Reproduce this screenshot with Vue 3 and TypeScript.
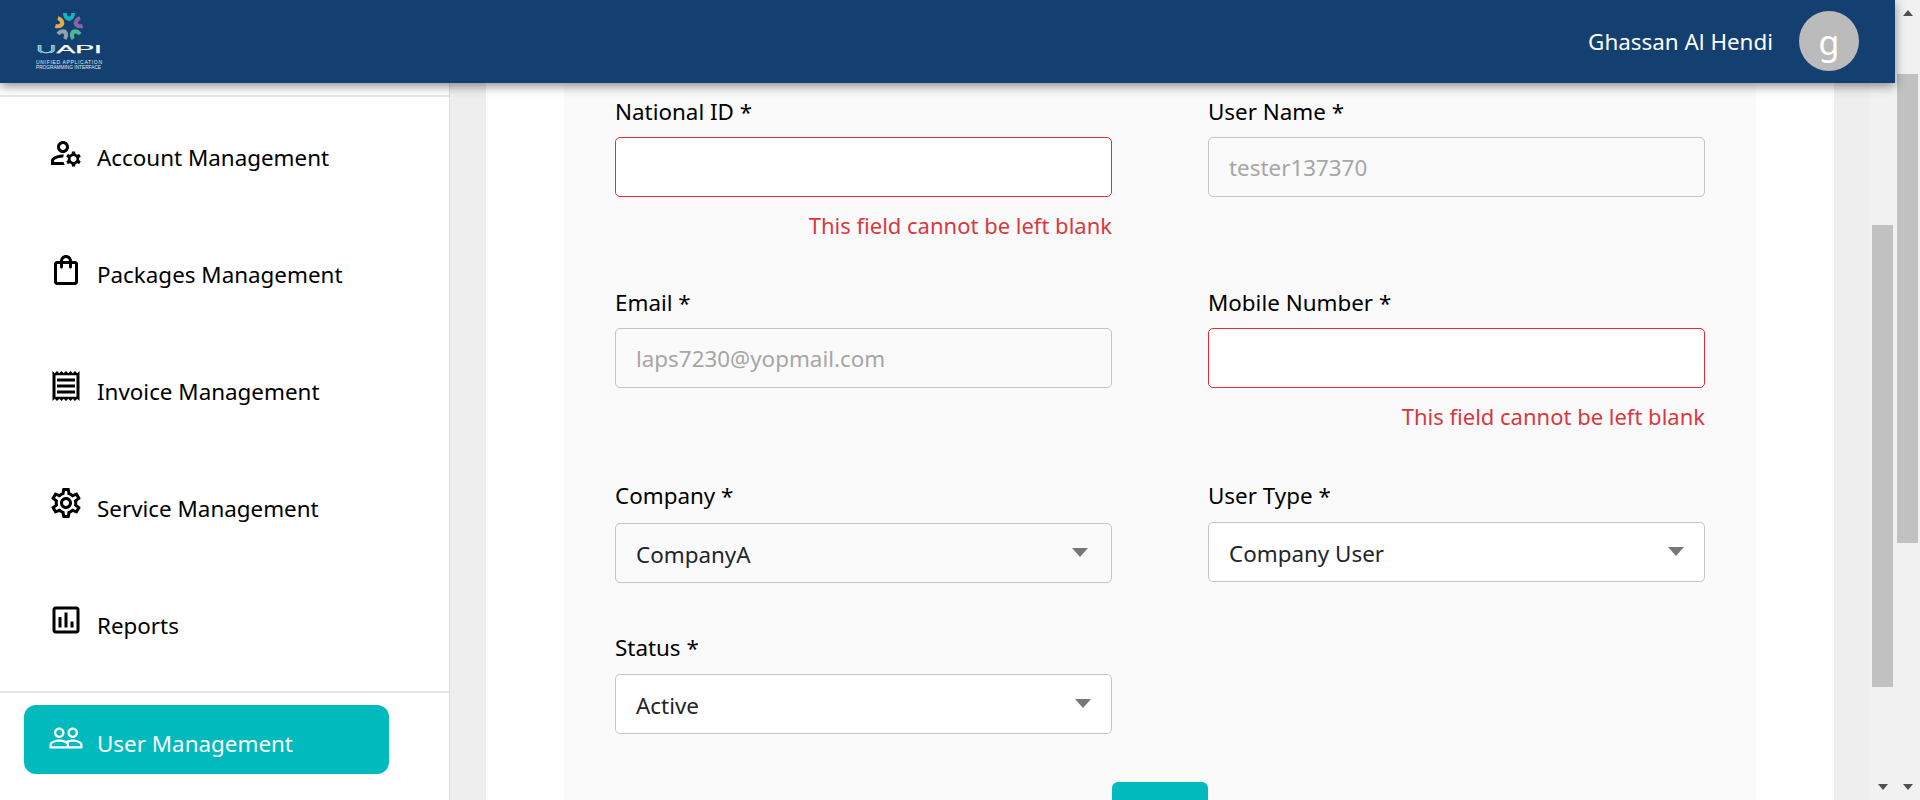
<template>
  <div class="page">
    <div class="main">
      <header class="topbar">
        <svg class="logo" viewBox="0 0 66 56" width="66" height="56">
          <g transform="translate(33 13)">
            <path v-for="p in petals" :key="p.color" :fill="p.color" :transform="`rotate(${p.angle})`" d="M-6-13C-6-8-3-5.500 0-5 3-5.500 6-8 6-13L2.200-13C2.200-11 1.200-9.500 0-9.500-1.200-9.500-2.200-11-2.200-13Z" />
          </g>
          <text class="logo-name" x="0" y="40" textLength="66" lengthAdjust="spacingAndGlyphs"><tspan fill="#19b5bd">U</tspan>API</text>
          <text class="logo-sub" x="0" y="51" textLength="66" lengthAdjust="spacing">UNIFIED APPLICATION</text>
          <text class="logo-sub" x="0" y="56" textLength="65" lengthAdjust="spacingAndGlyphs">PROGRAMMING INTERFACE</text>
        </svg>
        <div class="user">
          <span class="user-name">Ghassan Al Hendi</span>
          <span class="avatar">g</span>
        </div>
      </header>

      <div class="body">
        <aside class="sidebar">
          <nav class="menu">
            <a v-for="item in menu" :key="item.label" class="menu-item">
              <svg class="icon" viewBox="0 0 24 24" width="36" height="36"><path :d="item.icon" /></svg>
              <span>{{ item.label }}</span>
            </a>
          </nav>
          <div class="menu-bottom">
            <a class="menu-item active">
              <svg class="icon" viewBox="0 0 24 24" width="36" height="36"><path :d="peopleIcon" /></svg>
              <span>User Management</span>
            </a>
          </div>
        </aside>

        <section class="content">
          <div class="panel">
            <form class="form" @submit.prevent>
              <div class="row row-first">
                <label class="field">
                  <span class="label">National ID *</span>
                  <input class="input invalid" type="text" />
                  <span class="error">This field cannot be left blank</span>
                </label>
                <label class="field">
                  <span class="label">User Name *</span>
                  <input class="input" type="text" disabled placeholder="tester137370" />
                </label>
              </div>
              <div class="row row-second">
                <label class="field">
                  <span class="label">Email *</span>
                  <input class="input" type="text" disabled placeholder="laps7230@yopmail.com" />
                </label>
                <label class="field">
                  <span class="label">Mobile Number *</span>
                  <input class="input invalid" type="text" />
                  <span class="error">This field cannot be left blank</span>
                </label>
              </div>
              <div class="row row-select">
                <div class="field">
                  <span class="label">Company *</span>
                  <div class="select disabled select-company">CompanyA</div>
                </div>
                <div class="field">
                  <span class="label">User Type *</span>
                  <div class="select select-type">Company User</div>
                </div>
              </div>
              <div class="row">
                <div class="field">
                  <span class="label">Status *</span>
                  <div class="select select-status">Active</div>
                </div>
              </div>
              <div class="actions">
                <button class="submit" type="submit"></button>
              </div>
            </form>
          </div>
        </section>

        <div class="scrollbar inner-bar">
          <div class="thumb inner-thumb"></div>
          <i class="arrow-down"></i>
        </div>
      </div>
    </div>

    <div class="scrollbar outer-bar">
      <i class="arrow-up"></i>
      <div class="thumb outer-thumb"></div>
      <i class="arrow-down"></i>
    </div>
  </div>
</template>

<script setup lang="ts">
const petals = [
  { color: '#17b3b5', angle: 0 },
  { color: '#8a62a8', angle: 72 },
  { color: '#4fb795', angle: 144 },
  { color: '#8fa3ad', angle: 216 },
  { color: '#e3ab4f', angle: 288 }
]

const menu = [
  {
    label: 'Account Management',
    icon: 'M4 18v-.65c0-.34.16-.66.41-.81C6.1 15.53 8.03 15 10 15c.03 0 .05 0 .08.01.1-.7.3-1.37.59-1.98-.22-.02-.44-.03-.67-.03-2.42 0-4.68.67-6.61 1.82-.88.52-1.39 1.5-1.39 2.53V20h9.26c-.42-.6-.75-1.28-.97-2H4zM10 12c2.21 0 4-1.79 4-4s-1.790-4-4-4-4 1.790-4 4 1.790 4 4 4zm0-6c1.100 0 2 .9 2 2s-.9 2-2 2-2-.9-2-2 .9-2 2-2zM20.750 16c0-.22-.03-.42-.06-.63l1.140-1.010-1-1.730-1.450.49c-.32-.27-.68-.48-1.080-.63L18 11h-2l-.3 1.490c-.4.15-.76.36-1.080.63l-1.450-.49-1 1.730 1.140 1.010c-.03.21-.06.41-.06.63s.03.42.06.63l-1.140 1.010 1 1.730 1.450-.49c.32.27.68.48 1.080.63L16 21h2l.3-1.490c.4-.15.76-.36 1.080-.63l1.450.49 1-1.730-1.140-1.010c.03-.21.06-.41.06-.63zM17 18c-1.100 0-2-.9-2-2s.9-2 2-2 2 .9 2 2-.9 2-2 2z'
  },
  {
    label: 'Packages Management',
    icon: 'M18 6h-2c0-2.210-1.790-4-4-4S8 3.790 8 6H6c-1.100 0-2 .9-2 2v12c0 1.100.9 2 2 2h12c1.100 0 2-.9 2-2V8c0-1.100-.9-2-2-2zm-6-2c1.100 0 2 .9 2 2h-4c0-1.100.9-2 2-2zm6 16H6V8h2v2c0 .55.45 1 1 1s1-.45 1-1V8h4v2c0 .55.45 1 1 1s1-.45 1-1V8h2v12z'
  },
  {
    label: 'Invoice Management',
    icon: 'M19.500 3.500 18 2l-1.500 1.500L15 2l-1.500 1.500L12 2l-1.500 1.500L9 2 7.500 3.500 6 2 4.500 3.500 3 2v20l1.500-1.500L6 22l1.500-1.500L9 22l1.500-1.500L12 22l1.500-1.500L15 22l1.500-1.500L18 22l1.500-1.500L21 22V2l-1.500 1.500zM19 19.090H5V4.910h14v14.180zM6 15h12v2H6zm0-4h12v2H6zm0-4h12v2H6z'
  },
  {
    label: 'Service Management',
    icon: 'M19.430 12.980c.04-.32.07-.64.07-.98 0-.34-.03-.66-.07-.98l2.110-1.650c.19-.15.24-.42.12-.64l-2-3.460c-.09-.16-.26-.25-.44-.25-.06 0-.12.01-.17.03l-2.490 1c-.52-.4-1.080-.73-1.690-.98l-.38-2.650C14.460 2.180 14.250 2 14 2h-4c-.25 0-.46.18-.49.42l-.38 2.650c-.61.25-1.170.59-1.690.98l-2.490-1c-.06-.02-.12-.03-.18-.03-.17 0-.34.09-.43.25l-2 3.460c-.13.22-.07.49.12.64l2.110 1.650c-.04.32-.07.65-.07.98 0 .33.03.66.07.98l-2.110 1.650c-.19.15-.24.42-.12.64l2 3.460c.09.16.26.25.44.25.06 0 .12-.01.17-.03l2.490-1c.52.4 1.080.73 1.690.98l.38 2.650c.03.24.24.42.49.42h4c.25 0 .46-.18.49-.42l.38-2.650c.61-.25 1.170-.59 1.690-.98l2.490 1c.06.02.12.03.18.03.17 0 .34-.09.43-.25l2-3.460c.12-.22.07-.49-.12-.64l-2.110-1.650zm-1.980-1.710c.04.31.05.52.05.73 0 .21-.02.43-.05.73l-.14 1.130.89.7 1.080.84-.7 1.210-1.270-.51-1.040-.42-.9.68c-.43.32-.84.56-1.250.73l-1.060.43-.16 1.130-.2 1.350h-1.400l-.19-1.350-.16-1.130-1.060-.43c-.43-.18-.83-.41-1.230-.71l-.91-.7-1.060.43-1.270.51-.7-1.210 1.080-.84.89-.7-.14-1.130c-.03-.31-.05-.54-.05-.74s.02-.43.05-.73l.14-1.130-.89-.7-1.080-.84.7-1.210 1.270.51 1.040.42.9-.68c.43-.32.84-.56 1.250-.73l1.060-.43.16-1.130.2-1.350h1.390l.19 1.350.16 1.130 1.060.43c.43.18.83.41 1.230.71l.91.7 1.060-.43 1.270-.51.7 1.210-1.070.85-.89.7.14 1.130zM12 8c-2.210 0-4 1.790-4 4s1.790 4 4 4 4-1.790 4-4-1.790-4-4-4zm0 6c-1.100 0-2-.9-2-2s.9-2 2-2 2 .9 2 2-.9 2-2 2z'
  },
  {
    label: 'Reports',
    icon: 'M19 3H5c-1.100 0-2 .9-2 2v14c0 1.100.9 2 2 2h14c1.100 0 2-.9 2-2V5c0-1.100-.9-2-2-2zm0 16H5V5h14v14zM7 10h2v7H7zm4-3h2v10h-2zm4 6h2v4h-2z'
  }
]

const peopleIcon = 'M16.500 13c-1.200 0-3.070.34-4.500 1-1.430-.67-3.300-1-4.500-1C5.330 13 1 14.080 1 16.250V19h22v-2.750c0-2.170-4.330-3.250-6.500-3.250zm-4 4.500h-10v-1.250c0-.54 2.560-1.750 5-1.750s5 1.210 5 1.750v1.250zm9 0H14v-1.250c0-.46-.2-.86-.52-1.220.88-.3 1.960-.53 3.020-.53 2.440 0 5 1.210 5 1.750v1.250zM7.500 12c1.930 0 3.500-1.570 3.500-3.500S9.430 5 7.500 5 4 6.570 4 8.500 5.570 12 7.500 12zm0-5.500c1.100 0 2 .9 2 2s-.9 2-2 2-2-.9-2-2 .9-2 2-2zm9 5.500c1.930 0 3.500-1.570 3.500-3.500S18.430 5 16.500 5 13 6.570 13 8.500s1.570 3.500 3.500 3.500zm0-5.500c1.100 0 2 .9 2 2s-.9 2-2 2-2-.9-2-2 .9-2 2-2z'
</script>

<style>
html, body { margin: 0; height: 100%; overflow: hidden; }
</style>

<style scoped>
* { box-sizing: border-box; }
.page { display: flex; height: 800px; overflow: hidden; font-family: "Noto Sans", "Liberation Sans", sans-serif; color: #000; background: #eee; }
.main { flex: 1; min-width: 0; display: flex; flex-direction: column; }

.topbar { position: relative; z-index: 2; height: 83px; flex: none; display: flex; justify-content: space-between; align-items: flex-start; padding: 0 36px; background: #134070; box-shadow: 0 3px 10px rgba(0,0,0,.45); }
.logo { margin-top: 13px; overflow: visible; }
.logo-name { font: 400 11.500px "Liberation Sans", sans-serif; fill: #fff; stroke: #fff; stroke-width: .25px; }
.logo-sub { font: 400 5px "Liberation Sans", sans-serif; fill: #e4e9f0; }
.user { display: flex; align-items: center; gap: 26px; height: 83px; }
.user-name { color: #fff; font-size: 22.400px; }
.avatar { width: 60px; height: 60px; margin-top: -1px; border-radius: 50%; background: #bbb; color: #fff; font-size: 34px; line-height: 62px; text-align: center; }

.body { flex: 1; min-height: 0; display: flex; }

.sidebar { width: 450px; flex: none; background: #fff; border-right: 1px solid #ddd; padding-top: 12px; }
.menu { border-top: 2px solid #e6e6e6; border-bottom: 2px solid #e6e6e6; padding: 2.500px 0 8px; }
.menu-item { display: flex; align-items: center; gap: 13px; height: 116.800px; padding-left: 48px; font-size: 22.400px; color: #000; }
.icon { flex: none; margin-bottom: 10px; fill: currentColor; }
.menu-bottom { padding: 12px 0 0 24px; }
.menu-item.active { width: 365px; height: 69px; padding: 7px 0 0 24px; border-radius: 12px; background: #00babd; color: #fff; }

.content { flex: 1; min-width: 0; padding: 0 36px; background: #eee; }
.panel { height: 100%; padding: 0 78px; background: #fff; }
.form { height: 100%; padding: 14px 51px 0; background: #fafafa; overflow: hidden; }
.row { display: grid; grid-template-columns: 497px 497px; column-gap: 96px; align-items: start; }
.row-first { height: 191px; }
.row-second { height: 193px; }
.row-select { height: 152px; }
.field { display: flex; flex-direction: column; }
.label { height: 30px; margin-bottom: 10px; line-height: 30px; font-size: 22.400px; }
.input { display: block; width: 100%; height: 60px; padding: 0 20px; border: 1px solid #c4c4c4; border-radius: 5px; background: #fafafa; font: inherit; font-size: 22.400px; outline: none; }
.input::placeholder { color: #a6a6a6; opacity: 1; }
.input.invalid { border-color: #dc3035; background: #fff; }
.error { margin-top: 13px; line-height: 30px; text-align: right; font-size: 22px; color: #d9383e; }
.select { position: relative; height: 60px; padding: 0 20px; margin-top: 1px; border: 1px solid #c4c4c4; border-radius: 5px; background: #fff; font-size: 22.400px; line-height: 62px; color: #212529; }
.select.disabled { background: #fafafa; margin-top: 2px; }
.select::after { content: ""; position: absolute; top: 24px; right: 20px; border: 8px solid transparent; border-top: 9px solid #777; border-bottom: 0; }
.select-company::after { right: 23px; }
.actions { margin-top: 48px; display: flex; justify-content: center; }
.submit { width: 96px; height: 60px; border: 0; border-radius: 6px; background: #00babd; }

.scrollbar { position: relative; flex: none; width: 25px; display: flex; flex-direction: column; align-items: center; background: #f1f1f1; }
.thumb { width: 21px; background: #c1c1c1; }
.inner-thumb { height: 462px; margin-top: 142px; }
.outer-thumb { height: 469px; margin-top: 58px; }
.arrow-up, .arrow-down { width: 0; height: 0; border-left: 5.500px solid transparent; border-right: 5.500px solid transparent; }
.arrow-up { margin-top: 10px; border-bottom: 6px solid #505050; }
.arrow-down { margin-top: auto; margin-bottom: 10px; border-top: 6px solid #505050; }
</style>
